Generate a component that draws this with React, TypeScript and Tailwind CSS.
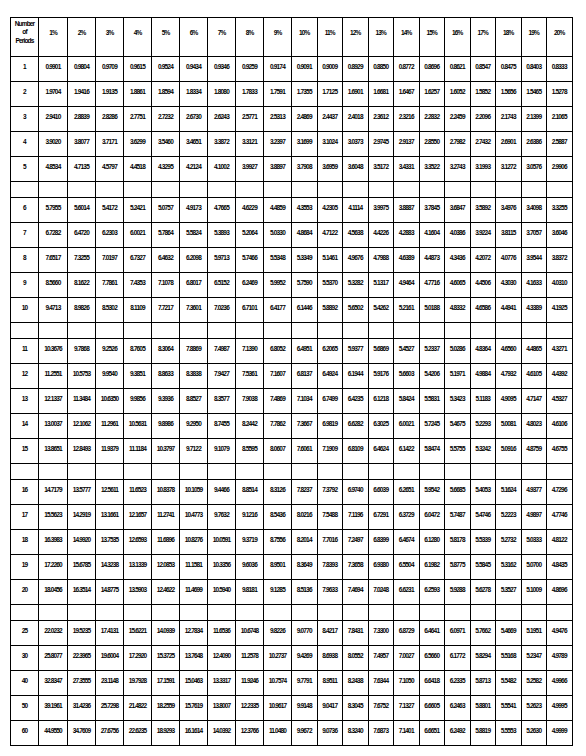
import React from "react";

const rates = Array.from({ length: 20 }, (_, i) => i + 1);
const groups: number[][] = [
  [1, 2, 3, 4, 5],
  [6, 7, 8, 9, 10],
  [11, 12, 13, 14, 15],
  [16, 17, 18, 19, 20],
  [25, 30, 40, 50, 60],
];

function pva(ratePct: number, n: number): string {
  const r = ratePct / 100;
  return ((1 - Math.pow(1 + r, -n)) / r).toFixed(4);
}

const cell = "border border-black text-center p-0";

export default function App() {
  return (
    <div className="min-h-screen bg-white pl-[10px] pt-[17px] font-['Liberation_Sans',Arial,sans-serif] text-black">
      <table className="table-fixed border-collapse w-[562px]">
        <colgroup>
          <col className="w-[28px]" />
          <col className="w-[29px]" />
          {rates.slice(1, 9).map((r) => (
            <col key={r} className="w-[28px]" />
          ))}
          {rates.slice(9).map((r) => (
            <col key={r} className="w-[25.5px]" />
          ))}
        </colgroup>
        <thead>
          <tr className="h-[39px]">
            <th className={`${cell} align-middle pb-[9px] font-bold text-[6.5px] leading-[8.3px] tracking-[-0.85px]`}>
              Number
              <br />
              of
              <br />
              Periods
            </th>
            {rates.map((r) => (
              <th
                key={r}
                className={`${cell} align-middle pb-[9px] font-bold text-[6.5px] leading-[8px] tracking-[-0.85px]`}
              >
                {r}%
              </th>
            ))}
          </tr>
        </thead>
        <tbody>
          {groups.map((g, gi) => (
            <React.Fragment key={gi}>
              {gi > 0 && (
                <tr className="h-[16px]">
                  {Array.from({ length: 21 }, (_, i) => (
                    <td key={i} className={cell}></td>
                  ))}
                </tr>
              )}
              {g.map((n) => (
                <tr key={n} className="h-[25px]">
                  <td className={`${cell} align-middle pb-[4px] font-bold text-[6.5px] leading-[8px] tracking-[-0.85px]`}>
                    {n}
                  </td>
                  {rates.map((r) => (
                    <td
                      key={r}
                      className={`${cell} align-middle pb-[4px] font-bold text-[6.5px] leading-[8px] tracking-[-0.85px]`}
                    >
                      {pva(r, n)}
                    </td>
                  ))}
                </tr>
              ))}
            </React.Fragment>
          ))}
        </tbody>
      </table>
    </div>
  );
}
